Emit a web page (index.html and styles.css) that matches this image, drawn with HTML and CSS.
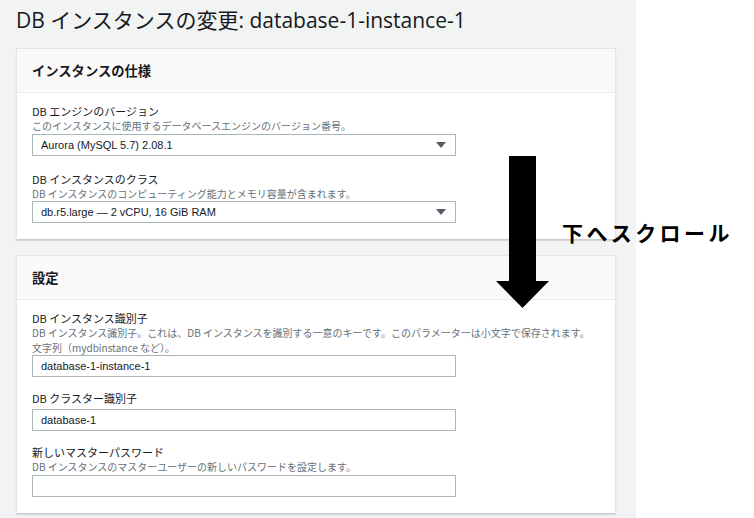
FILE: index.html
```html
<!DOCTYPE html>
<html lang="ja">
<head>
<meta charset="utf-8">
<title>DB インスタンスの変更</title>
<link rel="stylesheet" href="styles.css">
</head>
<body>
<div class="page">
  <main class="main">
    <h1 class="title">DB インスタンスの変更: database-1-instance-1</h1>

    <section class="card">
      <header class="card-head">インスタンスの仕様</header>
      <div class="card-body">
        <div class="field">
          <div class="label">DB エンジンのバージョン</div>
          <div class="desc">このインスタンスに使用するデータベースエンジンのバージョン番号。</div>
          <div class="select">Aurora (MySQL 5.7) 2.08.1<span class="caret"></span></div>
        </div>
        <div class="field">
          <div class="label">DB インスタンスのクラス</div>
          <div class="desc">DB インスタンスのコンピューティング能力とメモリ容量が含まれます。</div>
          <div class="select">db.r5.large — 2 vCPU, 16 GiB RAM<span class="caret"></span></div>
        </div>
      </div>
    </section>

    <section class="card">
      <header class="card-head">設定</header>
      <div class="card-body card-body-tight">
        <div class="field">
          <div class="label">DB インスタンス識別子</div>
          <div class="desc">DB インスタンス識別子。これは、DB インスタンスを識別する一意のキーです。このパラメーターは小文字で保存されます。<br>文字列（mydbinstance など）。</div>
          <div class="input">database-1-instance-1</div>
        </div>
        <div class="field">
          <div class="label">DB クラスター識別子</div>
          <div class="input">database-1</div>
        </div>
        <div class="field">
          <div class="label">新しいマスターパスワード</div>
          <div class="desc">DB インスタンスのマスターユーザーの新しいパスワードを設定します。</div>
          <div class="input"></div>
        </div>
      </div>
    </section>
  </main>
  <aside class="side"></aside>
</div>

<div class="annot">
  <svg class="arrow" width="53" height="152" viewBox="0 0 53 152">
    <polygon points="13,0 40,0 40,125 53,125 26.5,152 0,125 13,125" fill="#000"/>
  </svg>
  <div class="annot-text">下へスクロール</div>
</div>
</body>
</html>
```

FILE: styles.css
```css
html, body {
  margin: 0;
  padding: 0;
  height: 100%;
  overflow: hidden;
  background: #fff;
}

body {
  font-family: "Noto Sans CJK JP", "Noto Sans", sans-serif;
  color: #16191f;
  position: relative;
}

.page {
  display: flex;
  height: 518px;
}

.main {
  width: 636px;
  flex: none;
  background: #f2f3f3;
  padding: 0 20px 0 16px;
  box-sizing: border-box;
}

.side {
  flex: 1;
  background: #fff;
}

.title {
  margin: 0 0 8px;
  font-family: "Open Sans", "Noto Sans CJK JP", sans-serif;
  font-weight: 400;
  font-size: 21px;
  line-height: 40px;
  color: #16191f;
  white-space: nowrap;
}

.card {
  background: #fff;
  border: 1px solid #e3e6e6;
  border-bottom-color: #c7cccc;
  box-shadow: 0 1px 1px rgba(0, 28, 36, 0.12);
  margin-bottom: 15px;
}

.card-head {
  height: 43px;
  display: flex;
  align-items: center;
  padding: 0 15px;
  background: #fafafa;
  border-bottom: 1px solid #eaeded;
  font-weight: 700;
  font-size: 13.3px;
  color: #16191f;
}

.card-body {
  padding: 10px 15px 16px;
  display: flex;
  flex-direction: column;
  gap: 15px;
}

.card-body-tight {
  gap: 13px;
}

.field {
  display: flex;
  flex-direction: column;
}

.label {
  font-size: 11px;
  line-height: 16px;
  color: #16191f;
}

.desc {
  font-size: 10px;
  line-height: 14.5px;
  color: #687078;
}

.select,
.input {
  width: 424px;
  height: 22px;
  box-sizing: border-box;
  border: 1px solid #aab7b8;
  padding: 0 8px;
  display: flex;
  align-items: center;
  justify-content: space-between;
  font-family: "Liberation Sans", Arial, sans-serif;
  font-size: 11px;
  color: #16191f;
  background: #fff;
}

.label + .input {
  margin-top: 3px;
}

.caret {
  width: 0;
  height: 0;
  border-left: 5px solid transparent;
  border-right: 5px solid transparent;
  border-top: 6px solid #545b64;
  margin-right: 1px;
}

.annot {
  position: absolute;
  left: 496px;
  top: 156px;
  width: 250px;
  height: 152px;
}

.arrow {
  position: absolute;
  left: 0;
  top: 0;
  display: block;
}

.annot-text {
  position: absolute;
  left: 66px;
  top: 61px;
  font-family: "Noto Sans CJK JP", sans-serif;
  font-weight: 700;
  font-size: 21px;
  line-height: 30px;
  letter-spacing: 3.4px;
  color: #000;
  white-space: nowrap;
}
```
